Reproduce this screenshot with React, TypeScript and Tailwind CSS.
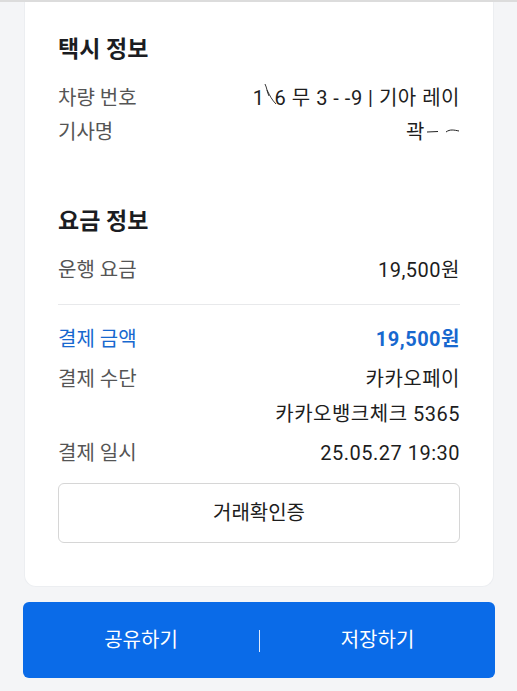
import React from "react";

const font = { fontFamily: "Roboto, 'Noto Sans CJK KR', 'Noto Sans', sans-serif" };

function Row({ label, value, blue, bold }: { label: string; value: React.ReactNode; blue?: boolean; bold?: boolean }) {
  return (
    <div className="flex justify-between items-center h-[34px] text-[20px]">
      <span className={blue ? "text-[#1768cf]" : "text-[#555555]"}>{label}</span>
      <span className={(blue ? "text-[#1768cf] " : "text-[#1d1d1d] ") + (bold ? "font-bold " : "") + "tracking-[0.5px]"}>{value}</span>
    </div>
  );
}

export default function App() {
  return (
    <div style={font} className="w-[517px] h-[691px] bg-[#f4f5f7] border-t-2 border-[#dcdcdc] overflow-hidden">
      <div className="ml-6 w-[470px] bg-white rounded-b-[12px] border-x border-b border-[#eceef1] px-[33px] pt-[34px] pb-[43px]">
        <h2 className="text-[23px] font-bold text-[#1b1d22] leading-[28px]">택시 정보</h2>
        <div className="mt-[17px]">
          <Row
            label="차량 번호"
            value={
              <span className="relative inline-flex items-center">
                <span>1</span>
                <span className="relative inline-block w-[10px]">
                  <svg width="14" height="26" viewBox="0 0 14 26" className="absolute -left-[2px] -top-[16px]">
                    <path d="M2 2 C4 6, 4 10, 6 14 M4 8 C7 14, 9 18, 13 22" stroke="#222" strokeWidth="0.9" fill="none" />
                  </svg>
                </span>
                <span>6 무 3 - -9 | 기아 레이</span>
              </span>
            }
          />
          <Row
            label="기사명"
            value={
              <span className="inline-flex items-center">
                <span>곽</span>
                <svg width="34" height="12" viewBox="0 0 34 12" className="ml-[1px]">
                  <path d="M1 6 L12 5.5" stroke="#222" strokeWidth="1" fill="none" />
                  <path d="M20 6 C24 3, 28 4, 33 5" stroke="#222" strokeWidth="1" fill="none" />
                </svg>
              </span>
            }
          />
        </div>

        <h2 className="mt-[59px] text-[23px] font-bold text-[#1b1d22] leading-[28px]">요금 정보</h2>
        <div className="mt-[17px]">
          <Row label="운행 요금" value="19,500원" />
        </div>
        <div className="mt-[17px] h-px bg-[#e8e9eb]" />
        <div className="mt-[17px]">
          <Row label="결제 금액" value="19,500원" blue bold />
        </div>
        <div className="mt-[6px] flex justify-between text-[20px] leading-[35px]">
          <span className="text-[#555555]">결제 수단</span>
          <div className="flex flex-col items-end text-[#1d1d1d] tracking-[0.5px]">
            <span>카카오페이</span>
            <span>카카오뱅크체크 5365</span>
          </div>
        </div>
        <div className="mt-[3px] flex justify-between items-center h-[35px] text-[20px]">
          <span className="text-[#555555]">결제 일시</span>
          <span className="text-[#1d1d1d] tracking-[0.5px]">25.05.27 19:30</span>
        </div>
        <button className="mt-[13px] w-full h-[60px] rounded-[6px] border border-[#d6d6d6] bg-white text-[20px] text-[#1d1d1d] flex items-center justify-center">
          거래확인증
        </button>
      </div>

      <div className="mt-[15px] ml-[23px] w-[472px] h-[76px] rounded-[6px] bg-[#0a6be8] flex items-center text-white text-[20px]">
        <span className="w-[236px] text-center">공유하기</span>
        <div className="w-px h-[22px] mt-[2px] bg-[#dfe9fb]" />
        <span className="w-[235px] text-center">저장하기</span>
      </div>
    </div>
  );
}
